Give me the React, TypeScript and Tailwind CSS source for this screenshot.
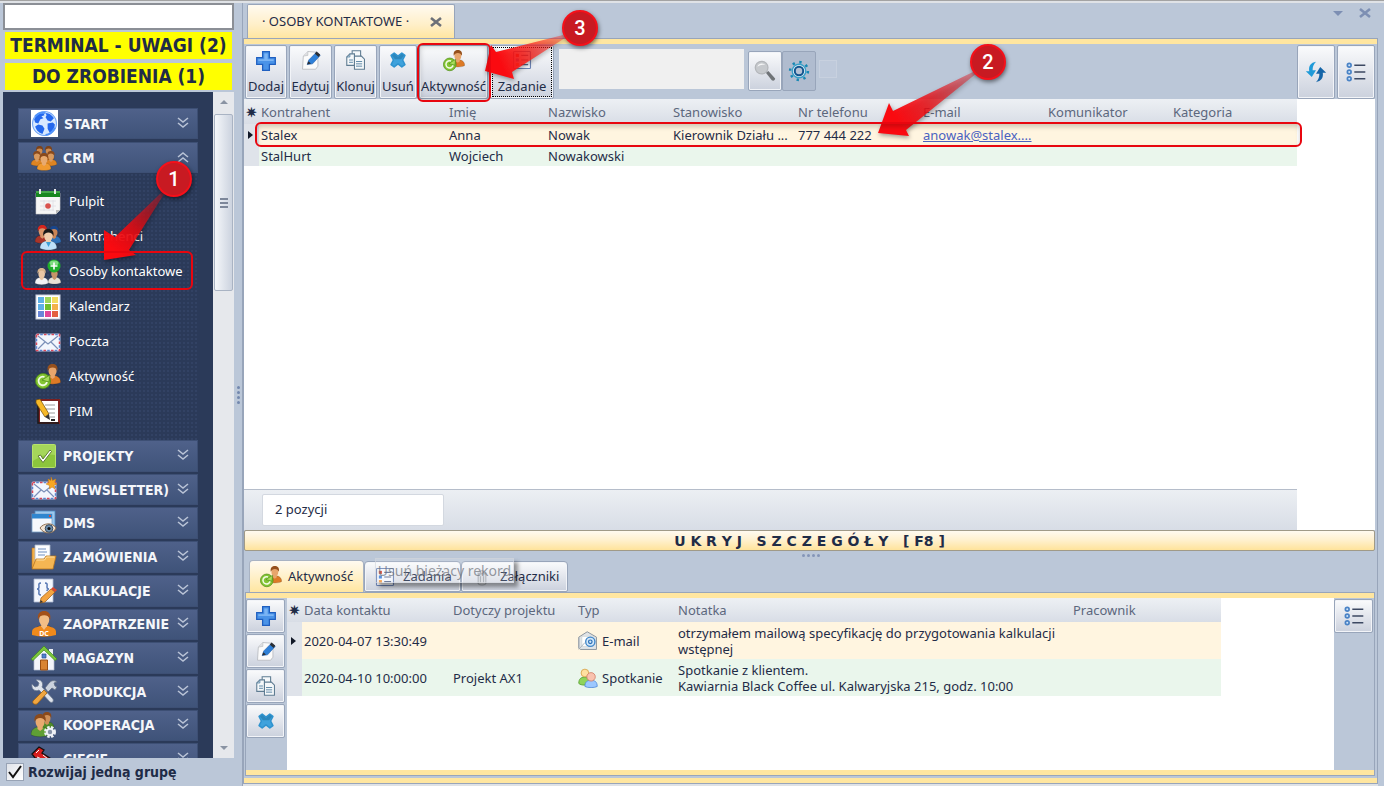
import type { ReactNode } from "react";
import clsx from "clsx";

type TIcon = { className?: string; children: ReactNode };

const Svg = ({ className = "size-[26px]", children }: TIcon) => (
  <svg viewBox="0 0 26 26" className={clsx("shrink-0", className)} aria-hidden="true">
    {children}
  </svg>
);

type TPerson = {
  x: number;
  y: number;
  s?: number;
  body: string;
  head?: string;
  hair?: string;
};

const Person = ({ x, y, s = 1, body, head = "#f0c08c", hair = "#8a4a1c" }: TPerson) => (
  <g transform={`translate(${x} ${y}) scale(${s})`}>
    <path d="M0 16c0-4 2.500-5.500 5-6h4c2.500.5 5 2 5 6-3 2-11 2-14 0z" fill={body} stroke="#00000040" strokeWidth=".6" />
    <path d="M5 9h4v2.500l-2 1.500-2-1.500z" fill={head} />
    <ellipse cx="7" cy="6" rx="3.500" ry="4.500" fill={head} />
    <path d="M2.800 6C2 1.500 4.500 0 7 0s5 1.500 4.200 6C10.500 4 9 3 7 3S3.500 4 2.800 6z" fill={hair} />
  </g>
);

const Envelope = () => (
  <>
    <rect x="1" y="5" width="24" height="17" rx="1" fill="#f3f6fd" stroke="#b9c3dc" />
    <rect x="1.500" y="5.500" width="23" height="16" fill="none" stroke="#d8485a" strokeWidth="1.500" strokeDasharray="2.500 5" />
    <rect x="1.500" y="5.500" width="23" height="16" fill="none" stroke="#5b83d0" strokeWidth="1.500" strokeDasharray="2.500 5" strokeDashoffset="3.750" />
    <path d="M3 7l10 8 10-8M3 20l7-7M23 20l-7-7" fill="none" stroke="#7b8fb8" strokeWidth="1.200" />
  </>
);

const GlobeIcon = () => (
  <Svg className="size-[27px]">
    <rect width="26" height="26" fill="#fff" />
    <circle cx="13" cy="13" r="11.500" fill="#d8e9ff" stroke="#6ea3f5" />
    <path d="M3 9c2-4 5-6 9-6l1 2-3 1 2 2-3 1-2 4-3-1zM14 3c4 0 7 3 8 5l-3 3-3-1-2-3 1-2zM7 14l4 1 2 3-2 5c-4-1-6-4-7-7zM16 13l5-1 2 2c0 3-2 6-5 8l-2-4z" fill="#2468ee" />
    <path d="M4 6c3-3 7-4 10-3M23 17c-2 4-5 7-9 7" fill="none" stroke="#4f92fb" strokeWidth="1.800" />
  </Svg>
);

const CrmIcon = () => (
  <Svg>
    <Person x={3} y={1} s={0.8} body="#b5651f" head="#cf8d52" hair="#7d431a" />
    <Person x={12} y={1} s={0.8} body="#b5651f" head="#cf8d52" hair="#7d431a" />
    <Person x={0} y={6} s={0.85} body="#dd8422" head="#d99a5e" hair="#8a4a1c" />
    <Person x={14} y={6} s={0.85} body="#dd8422" head="#d99a5e" hair="#8a4a1c" />
    <Person x={6} y={8} body="#f09a30" head="#e8aa70" />
  </Svg>
);

const PulpitIcon = () => (
  <Svg>
    <path d="M1 4h24v17l-4 4H1z" fill="#f6f6f6" stroke="#cfcfcf" strokeWidth=".6" />
    <path d="M1 2h24v6H1z" fill="#17871f" />
    <path d="M1 2h24v2H1z" fill="#44a84a" />
    <path d="M4 0h2v5H4zM19 0h2v5h-2z" fill="#e9e9e9" />
    <path d="M21 25v-4h4z" fill="#b9b9b9" />
    <g stroke="#e0e0e6" strokeWidth=".8">
      <path d="M5 12h16M5 17h16M5 21h14M9 11v11M14 11v11M18 11v11" />
    </g>
    <circle cx="13" cy="17" r="2.800" fill="#d9534f" />
  </Svg>
);

const KontrahenciIcon = () => (
  <Svg>
    <Person x={0} y={1} s={1.050} body="#a8352a" head="#d9966a" hair="#d5251c" />
    <Person x={12} y={2} s={1} body="#2f6fb5" head="#c98555" hair="#17458c" />
    <Person x={5} y={5} s={1.200} body="#bfe0f8" head="#f0cfae" hair="#1a1a1a" />
    <path d="M11 18h5l-2.500 5z" fill="#3a9fd8" />
  </Svg>
);

const OsobyIcon = () => (
  <Svg>
    <Person x={0} y={9} s={0.95} body="#f3f3f6" head="#e9c6a4" hair="#d9b48c" />
    <Person x={13} y={9} s={0.92} body="#e8e2d6" head="#c79468" hair="#5d3a1e" />
    <circle cx="19" cy="7" r="6.500" fill="#1fae2a" />
    <ellipse cx="19" cy="4" rx="4.500" ry="2.500" fill="#7fdc80" />
    <path d="M19 3.500v7M15.500 7h7" stroke="#fff" strokeWidth="1.600" />
  </Svg>
);

const KalendarzIcon = () => (
  <Svg>
    <rect x="1" y="1" width="24" height="24" fill="#fff" stroke="#c9cede" />
    <path d="M3 3h6v6H3zM3 10h6v6H3z" fill="#5fb0e6" />
    <path d="M10 3h6v6h-6z" fill="#9fd65a" />
    <path d="M10 10h6v6h-6z" fill="#6fbf2c" />
    <path d="M17 3h6v6h-6z" fill="#f4dc60" />
    <path d="M17 10h6v6h-6z" fill="#f3b24a" />
    <path d="M3 17h6v6H3z" fill="#6a86d8" />
    <path d="M10 17h6v6h-6z" fill="#e0479a" />
    <path d="M17 17h6v6h-6z" fill="#e4603f" />
  </Svg>
);

const PocztaIcon = () => (
  <Svg>
    <Envelope />
  </Svg>
);

const AktywnoscIcon = ({ className }: { className?: string }) => (
  <Svg className={className}>
    <Person x={9.500} y={0} s={1.150} body="#dd7a26" head="#e8a56c" hair="#96501c" />
    <circle cx="8" cy="17" r="7.500" fill="#83c433" stroke="#4b8a14" strokeWidth=".8" />
    <path d="M12 18a4.300 4.300 0 1 1-2.500-5" fill="none" stroke="#f2fbe4" strokeWidth="1.800" />
    <path d="M7 16l8-5-1 7z" fill="#a7dd5a" stroke="#3f7d10" strokeWidth=".6" />
  </Svg>
);

const PimIcon = () => (
  <Svg>
    <rect x="4" y="1" width="20" height="23" fill="#fff" stroke="#7b2020" strokeWidth="2" />
    <path d="M3 1v23h21" fill="none" stroke="#1a1a1a" strokeWidth="1.500" />
    <path d="M10 6h10M10 10h10M14 14h6M15 18h5" stroke="#9a9a9a" />
    <path d="M16 20h4v2h-4z" fill="#222" />
    <path d="M1 1l4-1 9 15-4 3L1 4z" fill="#f6b928" stroke="#6f4a08" strokeWidth=".7" />
    <path d="M10 18l4-3 1 6z" fill="#333" />
  </Svg>
);

const ProjektyIcon = () => (
  <Svg>
    <rect x="1.500" y="1.500" width="23" height="23" rx="1" fill="#8cc63c" stroke="#b7e26b" />
    <path d="M2 2h22v10C16 10 8 14 2 18z" fill="#a5d65a" />
    <path d="M7 13l2.500-1 2.500 4 7-9 1.500 1.500L12 19.500z" fill="#fff" stroke="#53702a" strokeWidth=".9" />
  </Svg>
);

const NewsletterIcon = () => (
  <Svg>
    <Envelope />
    <path d="M20 0l1.500 3.500L25 2l-1.500 3.500L26 7l-3 1 1 4-3-2-2.500 2V8.500L15 7l3-1.500L17 2l3 1.500z" fill="#f7a823" stroke="#c97b10" strokeWidth=".5" />
  </Svg>
);

const DmsIcon = () => (
  <Svg>
    <rect x="4" y="1" width="20" height="15" fill="#9cc9ee" stroke="#4b87bd" strokeWidth=".8" />
    <rect x="1" y="4" width="20" height="18" fill="#f5f8fc" stroke="#7ba2c8" strokeWidth=".8" />
    <path d="M1 4h20v4.500H1z" fill="#2f86cf" />
    <path d="M18 5h2v2h-2z" fill="#d94a3a" />
    <path d="M9 18c3-5 13-6 16 0-2 6-12 7-16 0z" fill="#f3e4d2" stroke="#8d6f52" />
    <circle cx="18" cy="18.500" r="3.800" fill="#6d8fae" stroke="#3a4c60" />
    <circle cx="18" cy="18.500" r="1.600" fill="#111" />
  </Svg>
);

const ZamowieniaIcon = () => (
  <Svg>
    <path d="M1 4h6l2 2v18H1z" fill="#f2b04a" stroke="#b9741a" strokeWidth=".6" />
    <path d="M4 1h15v20H4z" fill="#fcfdff" stroke="#a9b6cc" strokeWidth=".8" />
    <path d="M7 5h8M7 8h9M7 11h7" stroke="#6f8fc0" />
    <path d="M1 25l4-10h8l2-3h10l-3 13z" fill="#f5b653" stroke="#b9741a" strokeWidth=".8" />
    <path d="M5.500 16h8l2-3h8" fill="none" stroke="#fde0a6" />
  </Svg>
);

const KalkulacjeIcon = () => (
  <Svg>
    <path d="M3 1h19v23H3z" fill="#f4f7fd" stroke="#aebad2" strokeWidth=".8" />
    <path d="M10 5c-3 0-2 2-2 4s-2 2-2 2 2 0 2 2-1 4 2 4M14 5c3 0 2 2 2 4s2 2 2 2-2 0-2 2" fill="none" stroke="#5878b4" strokeWidth="1.500" />
    <path d="M9 25l1-5 10-9 4 3-10 10z" fill="#f3a440" stroke="#9b5c12" strokeWidth=".7" />
    <path d="M20 11l2-2 4 3-2 2z" fill="#d8472e" />
    <path d="M9 25l.7-3 2.300 2z" fill="#333" />
  </Svg>
);

const ZaopatrzenieIcon = () => (
  <Svg>
    <Person x={3} y={0} s={1.450} body="#ef8a1c" head="#f2bd85" hair="#a3511a" />
    <path d="M1 21c0-4 4-5 7-5h10c3 0 7 1 7 5v3c-8 2-16 2-24 0z" fill="#ef8a1c" />
    <path d="M10 15h6l-3 4z" fill="#f2bd85" />
    <text x="13" y="25" textAnchor="middle" fontSize="7" fontWeight="bold" fill="#fff" fontFamily="Noto Sans, sans-serif">
      DC
    </text>
  </Svg>
);

const MagazynIcon = () => (
  <Svg>
    <path d="M18 4h4v7h-4z" fill="#e9edf4" />
    <path d="M3 12l10-9 10 9v13H3z" fill="#f3f5fb" stroke="#b5bfd2" strokeWidth=".7" />
    <path d="M0 14L13 1l13 13-2 1.500L13 5 2 15.500z" fill="#7cc63c" stroke="#3f8a1a" strokeWidth=".7" />
    <path d="M9.500 15h7v10h-7z" fill="#d98432" stroke="#9b4f12" />
    <path d="M11 9h4v4h-4z" fill="#4f83cf" stroke="#2d4f8d" strokeWidth=".7" />
  </Svg>
);

const ProdukcjaIcon = () => (
  <Svg>
    <path d="M1 5l3 3 3-1 1-3-3-3c5-1 8 3 6 7l11 12c1 3-1 4-3 3L8 11C4 13 0 10 1 5z" fill="#dfe4ec" stroke="#6e7c92" strokeWidth=".8" />
    <path d="M14 9l4-5c3-3 5-3 8-1l-3 1 1 3 2 1-2 3-3-2-4 4z" fill="#cbd2dd" stroke="#5f6c80" strokeWidth=".8" />
    <path d="M2 22L13 11l3 3L6 25c-3 1-5-1-4-3z" fill="#f0a640" stroke="#a2620f" strokeWidth=".8" />
  </Svg>
);

const KooperacjaIcon = () => (
  <Svg>
    <Person x={9} y={0} s={1} body="#4f8a2a" head="#cf9058" />
    <Person x={0} y={2} s={1.300} body="#5f9f34" head="#e8aa70" />
    <circle cx="19" cy="20" r="4.500" fill="none" stroke="#eef1f6" strokeWidth="3" strokeDasharray="2.300 1.300" />
    <circle cx="19" cy="20" r="3.200" fill="#8793a8" stroke="#eef1f6" strokeWidth="2" />
  </Svg>
);

const CiecieIcon = () => (
  <Svg>
    <path d="M1 8l7-7 5 3-2 3 8 5v4L4 12z" fill="#d81e1e" stroke="#111" strokeWidth="1.300" />
    <path d="M5 7l3-3M12 9l5 4M6 11l9 4" stroke="#fff" />
  </Svg>
);

const PlusIcon = () => (
  <Svg className="size-[22px]">
    <path d="M9 2h8v7h7v8h-7v7H9v-7H2V9h7z" fill="#4a93e8" stroke="#1f5fc0" strokeWidth="1.500" />
    <path d="M11 4h4v7h7v2H4v-2h7z" fill="#7ab4f4" />
  </Svg>
);

const EditIcon = () => (
  <Svg className="size-5">
    <path d="M3 8l6-6 13 1v18l-3 4H2z" fill="#fbfbfb" stroke="#b2b5ba" />
    <path d="M3 8l6-1V2" fill="#dddee1" stroke="#b2b5ba" strokeWidth=".7" />
    <path d="M8 19l2-6L20 3l5 4-10 11z" fill="#2f80d8" stroke="#1f5aa5" strokeWidth=".7" />
    <path d="M18 5l2-3 5 4-2 3zM8 19l1.500-4.500 3.500 3z" fill="#2b2e34" />
  </Svg>
);

const CloneIcon = () => (
  <Svg className="size-5">
    <g fill="#f5f8fa" stroke="#5f7c92" strokeWidth="1.400">
      <path d="M8 1h11v14H8z" />
      <path d="M5 5L1 9v11h10V5z" />
      <path d="M11 8h9l4 4v13H11z" />
    </g>
    <path d="M5 5v4H1M13 15h8M13 18h8M13 21h8M4 13h5M4 16h5" fill="none" stroke="#5f8aa8" strokeWidth="1.300" />
  </Svg>
);

const DeleteIcon = () => (
  <Svg className="size-5">
    <path d="M4 7l4-3 5 4 5-4 4 3-3 6 3 6-4 3-5-4-5 4-4-3 3-6z" fill="#3fa2dc" stroke="#2f93cf" strokeLinejoin="round" strokeWidth="2" />
    <path d="M5 7l3-2 5 4 5-4 3 2-4 5H9z" fill="#2b87bd" />
  </Svg>
);

const TaskIcon = () => (
  <Svg className="size-5">
    <rect x="2" y="2" width="22" height="22" rx="1" fill="#f4f7fd" stroke="#6c83b4" strokeWidth="1.500" />
    <path d="M5 5h4v4H5z" fill="#d8392c" />
    <path d="M5 11h4v4H5z" fill="#3f7fd8" />
    <path d="M5 17h4v4H5z" fill="#f0943a" />
    <path d="M12 7h9M12 13h9M12 19h9" stroke="#56678c" strokeWidth="1.600" />
  </Svg>
);

const SearchIcon = () => (
  <Svg className="size-[22px]">
    <path d="M14 15l3-2 8 9c0 2-2 3-4 2z" fill="#6f7377" />
    <circle cx="9" cy="9" r="7.500" fill="#c6c9cd" stroke="#b3b6ba" strokeWidth="1.500" />
    <path d="M4 8c1-4 7-5 9-2-3-1-6 0-9 2z" fill="#f4f5f6" />
  </Svg>
);

const GearIcon = () => (
  <Svg className="size-[22px]">
    <circle cx="13" cy="13" r="10.500" fill="none" stroke="#1888b4" strokeWidth="3" strokeDasharray="2.800 5.447" />
    <circle cx="13" cy="13" r="8" fill="#eaf4fa" stroke="#3aa0c8" strokeWidth="1.600" />
    <circle cx="13" cy="13" r="5" fill="#b5c1d4" stroke="#12558f" strokeWidth="2.400" />
  </Svg>
);

const RefreshIcon = () => (
  <Svg className="size-[22px]">
    <path d="M13 1C7 2 4 6 5 12H1l7 7 5-8H9c0-4 1-7 4-10z" fill="#1f9ad8" />
    <path d="M13 25c6-1 9-5 8-11h4l-7-7-5 8h4c0 4-1 7-4 10z" fill="#1565a8" />
  </Svg>
);

const ListIcon = () => (
  <Svg className="size-[22px]">
    <g fill="#cfe4f8" stroke="#4a83c6" strokeWidth="2">
      <circle cx="5" cy="5" r="2.200" />
      <circle cx="5" cy="13" r="2.200" />
      <circle cx="5" cy="21" r="2.200" />
    </g>
    <path d="M11 5h13M11 13h13M11 21h13" stroke="#3c4862" strokeWidth="1.600" />
  </Svg>
);

const MailAtIcon = () => (
  <Svg className="size-5">
    <path d="M1 8L12 1l12 7v16H3l-2-2z" fill="#e0e4e7" stroke="#8e979f" strokeWidth="1.300" />
    <path d="M5 7h15v13H5z" fill="#fff" stroke="#c2c8cd" strokeWidth=".7" />
    <circle cx="16" cy="14" r="6" fill="#d3e8fa" stroke="#3f86c9" strokeWidth="1.800" />
    <circle cx="16" cy="14" r="2.300" fill="none" stroke="#2a6fb6" strokeWidth="1.600" />
    <path d="M1 24l8-9M1 9v14" stroke="#a0a9b0" fill="none" />
  </Svg>
);

const MeetingIcon = () => (
  <Svg className="size-5">
    <path d="M1 20c0-6 3-8 7-8s7 2 7 8c-3 3-11 3-14 0z" fill="#8fd45a" stroke="#4f9a28" />
    <circle cx="9" cy="6.500" r="5" fill="#ffe0a0" stroke="#d59a3a" />
    <path d="M9 24c0-6 3-8 8-8s8 2 8 8c-3 2-13 2-16 0z" fill="#9cc8ff" stroke="#4a86d8" />
    <circle cx="17" cy="11.500" r="5.500" fill="#f9c2ae" stroke="#cf7a62" />
  </Svg>
);

const ClipIcon = () => (
  <Svg className="size-5">
    <path d="M8 9h10v13c-2 2-8 2-10 0z" fill="#d5d8dd" stroke="#8f959e" />
    <path d="M7 8h12M11 8V5h4v3M11 12v8M15 12v8" fill="none" stroke="#8f959e" />
  </Svg>
);

const Chevrons = ({ up }: { up?: boolean }) => (
  <svg viewBox="0 0 12 12" className={clsx("mb-0.5 size-3", up && "rotate-180")} aria-hidden="true">
    <path d="M1 1l5 4 5-4M1 6l5 4 5-4" fill="none" stroke="#b9c3d6" strokeWidth="1.600" />
  </svg>
);

const BUTTON =
  "rounded-xs border border-[#98a5ba] bg-linear-to-b from-[#fafbfc] from-0% via-[#e3e6ed] via-50% to-[#cbd1dd] shadow-[inset_0_0_0_1px_#f2f4f8]";

const HEAD =
  "bg-linear-to-b from-[#edf0f4] from-0% via-[#e3e7ed] via-50% to-[#d8dde6] text-left font-normal text-[#5c677d]";

const topGroups = [
  { label: "START", icon: <GlobeIcon />, open: false },
  { label: "CRM", icon: <CrmIcon />, open: true },
];

const crmItems = [
  { label: "Pulpit", icon: <PulpitIcon /> },
  { label: "Kontrahenci", icon: <KontrahenciIcon /> },
  { label: "Osoby kontaktowe", icon: <OsobyIcon /> },
  { label: "Kalendarz", icon: <KalendarzIcon /> },
  { label: "Poczta", icon: <PocztaIcon /> },
  { label: "Aktywność", icon: <AktywnoscIcon /> },
  { label: "PIM", icon: <PimIcon /> },
];

const bottomGroups = [
  { label: "PROJEKTY", icon: <ProjektyIcon /> },
  { label: "(NEWSLETTER)", icon: <NewsletterIcon /> },
  { label: "DMS", icon: <DmsIcon /> },
  { label: "ZAMÓWIENIA", icon: <ZamowieniaIcon /> },
  { label: "KALKULACJE", icon: <KalkulacjeIcon /> },
  { label: "ZAOPATRZENIE", icon: <ZaopatrzenieIcon /> },
  { label: "MAGAZYN", icon: <MagazynIcon /> },
  { label: "PRODUKCJA", icon: <ProdukcjaIcon /> },
  { label: "KOOPERACJA", icon: <KooperacjaIcon /> },
  { label: "CIĘCIE", icon: <CiecieIcon /> },
];

const contacts = [
  ["Stalex", "Anna", "Nowak", "Kierownik Działu ...", "777 444 222", "anowak@stalex....", "", ""],
  ["StalHurt", "Wojciech", "Nowakowski", "", "", "", "", ""],
];

type TGroup = { label: string; icon: ReactNode; open?: boolean };

const NavGroup = ({ label, icon, open }: TGroup) => (
  <button
    type="button"
    aria-expanded={!!open}
    className="flex h-full min-h-[31px] w-full items-center border border-[#3d4f74] bg-linear-to-b from-[#4f618a] to-[#3f5379] pr-2 pl-3 text-left text-sm font-bold text-[#f4f6fa]"
  >
    {icon}
    <span className="ml-1.5 flex-1 whitespace-nowrap">{label}</span>
    <Chevrons up={open} />
  </button>
);

const Sidebar = () => (
  <aside className="flex w-[231px] shrink-0 flex-col">
    <input aria-label="Szukaj w menu" className="h-[27px] w-full border-2 border-[#8b8f96] bg-white px-1" />
    <div className="mx-0.5 mt-0.5 flex flex-col gap-1 text-center font-['DejaVu_Sans_Condensed','DejaVu_Sans',sans-serif] text-[19px] leading-[27px] font-bold whitespace-nowrap text-[#1f2c47]">
      <p className="bg-[#ffff00]">TERMINAL - UWAGI (2)</p>
      <p className="bg-[#ffff00]">DO ZROBIENIA (1)</p>
    </div>
    <div className="mt-0.5 flex min-h-0 flex-1">
      <nav className="min-w-0 flex-1 overflow-hidden bg-[#2b3a59] px-[15px] pt-4 font-['DejaVu_Sans_Condensed','DejaVu_Sans',sans-serif]">
        <div className="flex flex-col gap-[3px]">
          {topGroups.map((group) => (
            <NavGroup key={group.label} {...group} />
          ))}
        </div>
        <ul className="bg-[radial-gradient(#324264_1px,transparent_1px)] bg-[size:4px_4px] py-[11px]">
          {crmItems.map(({ label, icon }) => (
            <li key={label}>
              <a href="#" className="flex h-[35px] items-center gap-2 pl-[17px] font-['Noto_Sans',sans-serif] text-[13px] text-white">
                {icon}
                {label}
              </a>
            </li>
          ))}
        </ul>
        <div className="grid h-[335px] auto-rows-fr gap-0.5">
          {bottomGroups.map((group) => (
            <NavGroup key={group.label} {...group} />
          ))}
        </div>
      </nav>
      <div className="flex w-[21px] flex-col items-center bg-[#e6e8ec]">
        <span className="mt-2 mb-2.5 border-x-4 border-b-4 border-x-transparent border-b-[#8a93a3]" />
        <div className="flex h-[177px] w-[19px] flex-col items-center justify-center gap-0.5 rounded-xs border border-[#a9b3c3] bg-linear-to-r from-[#f5f7fa] to-[#ccd3df]">
          <span className="h-0.5 w-2 bg-[#7d879a]" />
          <span className="h-0.5 w-2 bg-[#7d879a]" />
          <span className="h-0.5 w-2 bg-[#7d879a]" />
        </div>
        <span className="mt-auto mb-2 border-x-4 border-t-4 border-x-transparent border-t-[#8a93a3]" />
      </div>
    </div>
    <label className="flex h-7 items-center gap-1 pl-[3px] font-['DejaVu_Sans_Condensed','DejaVu_Sans',sans-serif] text-sm leading-5 font-bold text-[#1f2c47]">
      <span className="grid">
        <input
          type="checkbox"
          defaultChecked
          className="peer col-start-1 row-start-1 size-[18px] appearance-none border border-[#98a3b5] bg-linear-to-br from-[#dfe3e9] to-white"
        />
        <svg viewBox="0 0 18 18" className="pointer-events-none invisible col-start-1 row-start-1 size-[18px] peer-checked:visible" aria-hidden="true">
          <path d="M3 9l4 5 8-11" fill="none" stroke="#111" strokeWidth="2" />
        </svg>
      </span>
      Rozwijaj jedną grupę
    </label>
  </aside>
);

const ToolButton = ({ label, icon, className }: { label: string; icon: ReactNode; className: string }) => (
  <button type="button" className={clsx("flex h-[54px] flex-col items-center justify-between pt-1 pb-0.5 leading-5", BUTTON, className)}>
    {icon}
    <span className="whitespace-nowrap">{label}</span>
  </button>
);

const Toolbar = () => (
  <div className="flex items-start bg-[#bbc7d8] pt-px pr-0.5 pl-px">
    <div className="flex gap-0.5">
      <ToolButton label="Dodaj" icon={<PlusIcon />} className="w-[42px]" />
      <ToolButton label="Edytuj" icon={<EditIcon />} className="w-[43px]" />
      <ToolButton label="Klonuj" icon={<CloneIcon />} className="w-[43px]" />
      <ToolButton label="Usuń" icon={<DeleteIcon />} className="w-[38px]" />
      <ToolButton label="Aktywność" icon={<AktywnoscIcon className="size-[22px]" />} className="w-[69px]" />
      <ToolButton
        label="Zadanie"
        icon={<TaskIcon />}
        className="w-[64px] outline-1 -outline-offset-3 outline-black outline-dotted"
      />
    </div>
    <input aria-label="Szukaj" className="mt-1 ml-[5px] h-10 w-[185px] bg-[#f0f0f0] px-2" />
    <div className="mt-1.5 ml-1 flex">
      <button type="button" aria-label="Znajdź" className={clsx("flex h-10 w-[34px] items-center justify-center", BUTTON)}>
        <SearchIcon />
      </button>
      <button type="button" aria-label="Ustawienia" className="flex h-10 w-[34px] items-center justify-center rounded-xs border border-[#98a5ba] bg-[#b0bccf]">
        <GearIcon />
      </button>
    </div>
    <input type="checkbox" disabled aria-label="Filtr" className="mt-[15px] ml-[3px] size-[18px] appearance-none border border-[#c8d1df] bg-[#bfcadb]" />
    <div className="ml-auto flex gap-0.5">
      <button type="button" aria-label="Odśwież" className={clsx("flex h-[54px] w-[38px] items-center justify-center", BUTTON)}>
        <RefreshIcon />
      </button>
      <button type="button" aria-label="Widok listy" className={clsx("flex h-[54px] w-[38px] items-center justify-center", BUTTON)}>
        <ListIcon />
      </button>
    </div>
  </div>
);

const RowMarker = () => (
  <span className="ml-1 block w-0 border-y-4 border-l-5 border-y-transparent border-l-[#111827]" />
);

const ContactsTable = () => (
  <table className="w-full table-fixed border-collapse">
    <colgroup>
      <col className="w-[15px]" />
      <col className="w-[188px]" />
      <col className="w-[99px]" />
      <col className="w-[125px]" />
      <col className="w-[125px]" />
      <col className="w-[125px]" />
      <col className="w-[125px]" />
      <col className="w-[125px]" />
      <col />
    </colgroup>
    <thead>
      <tr className={clsx("h-[25px]", HEAD)}>
        <th className="pt-0.5 text-center font-bold text-[#1f2c47]">✷</th>
        {["Kontrahent", "Imię", "Nazwisko", "Stanowisko", "Nr telefonu", "E-mail", "Komunikator", "Kategoria"].map((name) => (
          <th key={name} className="px-0.5 pt-0.5 font-normal">
            {name}
          </th>
        ))}
      </tr>
    </thead>
    <tbody>
      {contacts.map((row, index) => (
        <tr
          key={row[0]}
          className={clsx("h-[21px] leading-5", index === 0 ? "bg-[#fff5e0]" : "bg-[#eaf6ec]")}
        >
          <td className="bg-[#dfe3ea]">{index === 0 && <RowMarker />}</td>
          {row.map((value, col) => (
            <td key={col} className="px-0.5 whitespace-nowrap">
              {col === 5 && value ? (
                <a href="#" className="text-[#4a62c0] underline">
                  {value}
                </a>
              ) : (
                value
              )}
            </td>
          ))}
        </tr>
      ))}
    </tbody>
  </table>
);

const DetailsTable = () => (
  <table className="w-[934px] table-fixed border-collapse">
    <colgroup>
      <col className="w-[15px]" />
      <col className="w-[149px]" />
      <col className="w-[125px]" />
      <col className="w-[100px]" />
      <col className="w-[395px]" />
      <col />
    </colgroup>
    <thead>
      <tr className={clsx("h-6", HEAD)}>
        <th className="pt-0.5 text-center font-bold text-[#1f2c47]">✷</th>
        {["Data kontaktu", "Dotyczy projektu", "Typ", "Notatka", "Pracownik"].map((name) => (
          <th key={name} className="px-0.5 pt-0.5 font-normal">
            {name}
          </th>
        ))}
      </tr>
    </thead>
    <tbody className="leading-4">
      <tr className="h-[37px] bg-[#fff5e0]">
        <td className="bg-[#dfe3ea]">
          <RowMarker />
        </td>
        <td className="px-0.5">2020-04-07 13:30:49</td>
        <td />
        <td className="px-0.5">
          <span className="flex items-center gap-1">
            <MailAtIcon />
            E-mail
          </span>
        </td>
        <td className="px-0.5">
          otrzymałem mailową specyfikację do przygotowania kalkulacji
          <br />
          wstępnej
        </td>
        <td />
      </tr>
      <tr className="h-[37px] bg-[#eaf6ec]">
        <td className="bg-[#dfe3ea]" />
        <td className="px-0.5">2020-04-10 10:00:00</td>
        <td className="px-0.5">Projekt AX1</td>
        <td className="px-0.5">
          <span className="flex items-center gap-1">
            <MeetingIcon />
            Spotkanie
          </span>
        </td>
        <td className="px-0.5">
          Spotkanie z klientem.
          <br />
          Kawiarnia Black Coffee ul. Kalwaryjska 215, godz. 10:00
        </td>
        <td />
      </tr>
    </tbody>
  </table>
);

const SideButton = ({ label, children }: { label: string; children: ReactNode }) => (
  <button type="button" aria-label={label} className={clsx("flex h-[34px] w-[39px] items-center justify-center", BUTTON)}>
    {children}
  </button>
);

const Details = () => (
  <section className="mr-0.5 ml-px pb-0.5">
    <div className="relative flex items-end pt-1.5 pl-1">
      <button
        type="button"
        className="flex h-8 w-[115px] items-center gap-1.5 rounded-t-sm border border-b-0 border-[#a9b3c3] bg-linear-to-b from-[#fffaf0] to-[#ffe6a0] pl-2.5"
      >
        <AktywnoscIcon className="size-[22px]" />
        Aktywność
      </button>
      <button type="button" className={clsx("flex h-[31px] w-[97px] items-center gap-2 rounded-t-sm pl-2.5", BUTTON)}>
        <TaskIcon />
        Zadania
      </button>
      <button type="button" className={clsx("flex h-[31px] w-[107px] items-center gap-2 rounded-t-sm pl-2.5", BUTTON)}>
        <ClipIcon />
        Załączniki
      </button>
      <div
        role="tooltip"
        className="absolute top-1 left-[130px] flex h-[25px] w-[139px] items-center justify-center border border-[#d0d4da]/60 bg-white/15 text-sm whitespace-nowrap text-[#6b7078]/70 shadow-[4px_4px_4px_#00000066]"
      >
        Usuń bieżący rekord
      </div>
    </div>
    <div className="border border-[#98a5ba]">
      <div className="h-[5px] bg-[#ffe6a0]" />
      <div className="flex min-h-[172px] bg-[#bbc7d8]">
        <div className="flex w-[41px] flex-col gap-px pt-px">
          <SideButton label="Dodaj">
            <PlusIcon />
          </SideButton>
          <SideButton label="Edytuj">
            <EditIcon />
          </SideButton>
          <SideButton label="Klonuj">
            <CloneIcon />
          </SideButton>
          <SideButton label="Usuń">
            <DeleteIcon />
          </SideButton>
        </div>
        <div className="min-w-0 flex-1 overflow-hidden bg-white">
          <DetailsTable />
        </div>
        <div className="w-10 pt-px">
          <SideButton label="Widok listy">
            <ListIcon />
          </SideButton>
        </div>
      </div>
      <div className="h-[5px] bg-[#ffe6a0]" />
    </div>
  </section>
);

const Badge = ({ value, className }: { value: number; className: string }) => (
  <span
    className={clsx(
      "absolute flex size-9 items-center justify-center rounded-full border-2 border-[#f5101a] bg-[#c81a22] font-['Roboto',sans-serif] text-xl font-medium text-white shadow-[1px_2px_4px_#00000080]",
      className
    )}
  >
    {value}
  </span>
);

const FRAME = "absolute rounded-md border-2 border-[#e8060f]";

const Annotations = () => (
  <div className="pointer-events-none absolute inset-0 overflow-hidden">
    <svg className="absolute inset-0 size-full drop-shadow-[1px_2px_2px_#00000060]" aria-hidden="true">
      <defs>
        <linearGradient id="arrow-1" gradientUnits="userSpaceOnUse" x1="105" y1="260" x2="164" y2="190">
          <stop offset=".15" stopColor="#fa0a10" />
          <stop offset=".45" stopColor="#f00a10" stopOpacity=".85" />
          <stop offset="1" stopColor="#d01018" stopOpacity=".35" />
        </linearGradient>
        <linearGradient id="arrow-2" gradientUnits="userSpaceOnUse" x1="878" y1="133" x2="976" y2="72">
          <stop offset=".2" stopColor="#fa0a10" />
          <stop offset=".5" stopColor="#f00a10" stopOpacity=".8" />
          <stop offset="1" stopColor="#e01018" stopOpacity=".35" />
        </linearGradient>
        <linearGradient id="arrow-3" gradientUnits="userSpaceOnUse" x1="485" y1="71" x2="564" y2="36">
          <stop offset=".2" stopColor="#fa0a10" />
          <stop offset=".5" stopColor="#ff1a14" stopOpacity=".8" />
          <stop offset="1" stopColor="#ff2018" stopOpacity=".35" />
        </linearGradient>
      </defs>
      <path d="M104 260V230l11 7 47-45 2 2-35 56 7 5z" fill="url(#arrow-1)" />
      <path d="M878 133l11-30 4 8 82-40 2 2-71 57 3 6z" fill="url(#arrow-2)" />
      <path d="M485 71l6-26 5 7 67-17 2 3-53 34 2 7z" fill="url(#arrow-3)" />
    </svg>
    <span className={clsx(FRAME, "top-[251px] left-[21px] h-[39px] w-[172px]")} />
    <span className={clsx(FRAME, "top-[43px] left-[417px] h-[59px] w-[74px] shadow-[inset_0_0_6px_#00000040]")} />
    <span className={clsx(FRAME, "top-[122px] right-[82px] left-[255px] h-[25px] shadow-[inset_0_3px_5px_#00000030]")} />
    <Badge value={1} className="top-[161px] left-[156px]" />
    <Badge value={2} className="top-[44px] left-[970px]" />
    <Badge value={3} className="top-[10px] left-[562px]" />
  </div>
);

const App = () => {
  return (
    <div className="relative flex h-screen min-h-[786px] flex-col overflow-hidden bg-[#bbc7d8] font-['Noto_Sans',sans-serif] text-[13px] text-[#1f2c47]">
      <div className="h-[3px] shrink-0 border-t border-[#a3a3a3] bg-[#dfe2e6]" />
      <div className="flex min-h-0 flex-1 pr-1.5 pl-[3px]">
        <Sidebar />
        <div className="flex w-[9px] shrink-0 flex-col items-center justify-center gap-0.5 border-r border-[#98a5ba]">
          <span className="size-[3px] rounded-full bg-[#7388ae]" />
          <span className="size-[3px] rounded-full bg-[#7388ae]" />
          <span className="size-[3px] rounded-full bg-[#7388ae]" />
          <span className="size-[3px] rounded-full bg-[#7388ae]" />
        </div>
        <main className="flex min-w-0 flex-1 flex-col">
          <div className="flex h-[35px] items-end pl-1">
            <div className="flex h-[34px] w-[208px] items-center justify-between rounded-t-xs border border-b-0 border-[#98a5ba] bg-linear-to-b from-[#fffaf0] from-0% via-[#ffefc8] via-60% to-[#ffe6a0] pr-3 pl-3.5">
              <span>· OSOBY KONTAKTOWE ·</span>
              <button type="button" aria-label="Zamknij kartę">
                <svg viewBox="0 0 12 12" className="size-3" aria-hidden="true">
                  <path d="M1 2l10 8M11 2L1 10" stroke="#6c7078" strokeWidth="2.600" />
                </svg>
              </button>
            </div>
            <div className="ml-auto flex items-center gap-4 self-start pt-1 pr-[7px]">
              <button type="button" aria-label="Lista kart">
                <span className="block border-x-5 border-t-5 border-x-transparent border-t-[#7d8fb3]" />
              </button>
              <button type="button" aria-label="Zamknij">
                <svg viewBox="0 0 12 12" className="size-3" aria-hidden="true">
                  <path d="M1 2l10 8M11 2L1 10" stroke="#7d8fb3" strokeWidth="2.600" />
                </svg>
              </button>
            </div>
          </div>
          <div className="flex min-h-0 flex-1 flex-col border-x border-t border-[#98a5ba]">
            <div className="h-[5px] shrink-0 bg-[#ffe6a0]" />
            <Toolbar />
            <div className="mr-0.5 flex min-h-0 flex-1 bg-white">
              <div className="flex min-w-0 flex-1 flex-col">
                <ContactsTable />
                <div className="mt-auto flex h-[41px] items-center border-t border-[#b5bdca] bg-linear-to-b from-[#eceff3] to-[#d8dde6] pl-[18px]">
                  <div className="flex h-8 w-[182px] items-center rounded-xs border border-[#d3d8e0] bg-white pl-3">2 pozycji</div>
                </div>
              </div>
              <div className="w-[78px]" />
            </div>
            <button
              type="button"
              className="mr-0.5 h-[21px] shrink-0 rounded-xs border border-[#a09a88] bg-linear-to-b from-[#fffaf0] from-0% via-[#fff0cc] via-50% to-[#ffe39a] font-['DejaVu_Sans',sans-serif] text-sm leading-[18px] font-bold whitespace-pre"
            >
              {"U K R Y J   S Z C Z E G Ó Ł Y   [ F8 ]"}
            </button>
            <div className="flex h-0 justify-center gap-0.5 pt-[3px]">
              <span className="size-[3px] shrink-0 rounded-full bg-[#8495b8]" />
              <span className="size-[3px] shrink-0 rounded-full bg-[#8495b8]" />
              <span className="size-[3px] shrink-0 rounded-full bg-[#8495b8]" />
              <span className="size-[3px] shrink-0 rounded-full bg-[#8495b8]" />
            </div>
            <Details />
            <div className="h-[5px] shrink-0 bg-[#ffe6a0]" />
          </div>
          <div className="h-[3px] shrink-0 border-t border-[#98a5ba] bg-[#dfe2e6]" />
        </main>
      </div>
      <Annotations />
    </div>
  );
};

export default App;
